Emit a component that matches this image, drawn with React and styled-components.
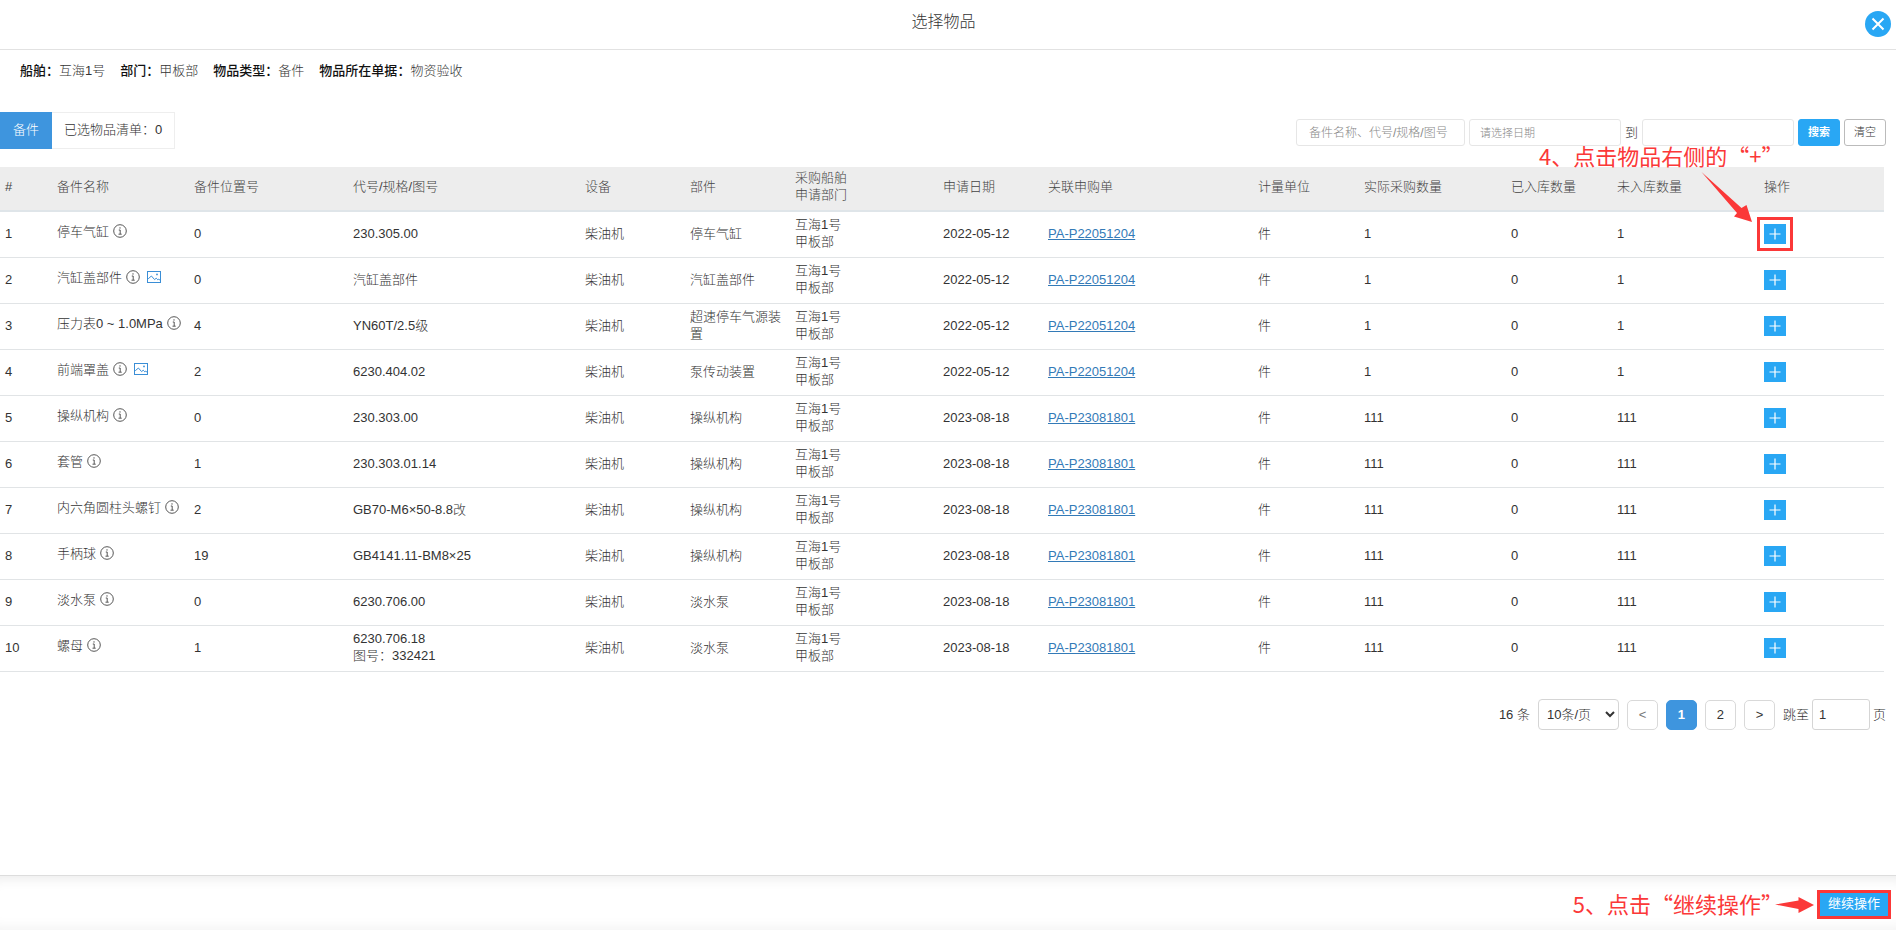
import React, { useState } from 'react';
import styled, { createGlobalStyle } from 'styled-components';

const columns = [
    { title: '#', width: 52 },
    { title: '备件名称', width: 137 },
    { title: '备件位置号', width: 159 },
    { title: '代号/规格/图号', width: 232 },
    { title: '设备', width: 105 },
    { title: '部件', width: 105 },
    { title: '采购船舶', subtitle: '申请部门', width: 148 },
    { title: '申请日期', width: 105 },
    { title: '关联申购单', width: 210 },
    { title: '计量单位', width: 106 },
    { title: '实际采购数量', width: 147 },
    { title: '已入库数量', width: 106 },
    { title: '未入库数量', width: 147 },
    { title: '操作', width: 125 },
];

const items = [
    { id: 1, name: '停车气缸', place: 0, code: '230.305.00', part: '停车气缸', date: '2022-05-12', order: 'PA-P22051204', amount: 1 },
    { id: 2, name: '汽缸盖部件', photo: true, place: 0, code: '汽缸盖部件', part: '汽缸盖部件', date: '2022-05-12', order: 'PA-P22051204', amount: 1 },
    { id: 3, name: '压力表0 ~ 1.0MPa', place: 4, code: 'YN60T/2.5级', part: '超速停车气源装置', date: '2022-05-12', order: 'PA-P22051204', amount: 1 },
    { id: 4, name: '前端罩盖', photo: true, place: 2, code: '6230.404.02', part: '泵传动装置', date: '2022-05-12', order: 'PA-P22051204', amount: 1 },
    { id: 5, name: '操纵机构', place: 0, code: '230.303.00', part: '操纵机构', date: '2023-08-18', order: 'PA-P23081801', amount: 111 },
    { id: 6, name: '套管', place: 1, code: '230.303.01.14', part: '操纵机构', date: '2023-08-18', order: 'PA-P23081801', amount: 111 },
    { id: 7, name: '内六角圆柱头螺钉', place: 2, code: 'GB70-M6×50-8.8改', part: '操纵机构', date: '2023-08-18', order: 'PA-P23081801', amount: 111 },
    { id: 8, name: '手柄球', place: 19, code: 'GB4141.11-BM8×25', part: '操纵机构', date: '2023-08-18', order: 'PA-P23081801', amount: 111 },
    { id: 9, name: '淡水泵', place: 0, code: '6230.706.00', part: '淡水泵', date: '2023-08-18', order: 'PA-P23081801', amount: 111 },
    { id: 10, name: '螺母', place: 1, code: '6230.706.18', drawing: '332421', part: '淡水泵', date: '2023-08-18', order: 'PA-P23081801', amount: 111 },
];

const summary = [
    { label: '船舶', value: '互海1号' },
    { label: '部门', value: '甲板部' },
    { label: '物品类型', value: '备件' },
    { label: '物品所在单据', value: '物资验收' },
];

function InfoIcon() {
    return (
        <svg width="14" height="14" viewBox="0 0 14 14" fill="none" stroke="#444" aria-hidden="true">
            <circle cx="7" cy="7" r="6.3" strokeWidth="0.9" />
            <path d="M5.8 6h1.4v4M5.5 10.2h3.2" strokeWidth="0.9" />
            <circle cx="7" cy="3.9" r="0.7" fill="#444" stroke="none" />
        </svg>
    );
}

function PhotoIcon() {
    return (
        <svg width="14" height="14" viewBox="0 0 14 14" fill="none" stroke="#3a8ed6" aria-hidden="true">
            <rect x="0.5" y="1.5" width="13" height="11" />
            <path d="M1.2 8.8L4.4 6l3.2 3.6 1.6-1.4 1.6 1.6 1-0.8 1.4 1.6" />
            <circle cx="10" cy="4.4" r="0.9" fill="#3a8ed6" stroke="none" />
        </svg>
    );
}

function ItemRow({ item }) {
    return (
        <tr>
            <Cell>{item.id}</Cell>
            <Cell>
                <ItemName>
                    {item.name}
                    <InfoIcon />
                    {item.photo && <PhotoLink href="#photo" aria-label="查看图片"><PhotoIcon /></PhotoLink>}
                </ItemName>
            </Cell>
            <Cell>{item.place}</Cell>
            <Cell>
                {item.code}
                {item.drawing && <div>图号：{item.drawing}</div>}
            </Cell>
            <Cell>柴油机</Cell>
            <Cell>{item.part}</Cell>
            <Cell>
                <div>互海1号</div>
                <div>甲板部</div>
            </Cell>
            <Cell>{item.date}</Cell>
            <Cell><OrderLink href="#order">{item.order}</OrderLink></Cell>
            <Cell>件</Cell>
            <Cell>{item.amount}</Cell>
            <Cell>0</Cell>
            <Cell>{item.amount}</Cell>
            <Cell>
                <AddWrap>
                    <AddButton type="button" aria-label="添加">
                        <svg width="12" height="12" viewBox="0 0 12 12" stroke="#fff" strokeWidth="1.2" aria-hidden="true">
                            <path d="M6 0.5v11M0.5 6h11" />
                        </svg>
                    </AddButton>
                    {item.id === 1 && <AddHint />}
                </AddWrap>
            </Cell>
        </tr>
    );
}

function AddHint() {
    return (
        <>
            <HintFrame />
            <HintArrow width="52" height="52" viewBox="0 0 52 52" aria-hidden="true">
                <path d="M0.5 1L40.5 37L45.5 34L51 51L33 45.5L36 42Z" fill="#fb3838" />
            </HintArrow>
            <FloatingNote>4、点击物品右侧的“+”</FloatingNote>
        </>
    );
}

function App() {
    const [page, setPage] = useState(1);

    return (
        <>
            <GlobalStyle />
            <Dialog lang="zh-CN">
                <Header>
                    <Title>选择物品</Title>
                    <CloseButton type="button" aria-label="关闭">
                        <svg width="14" height="14" viewBox="0 0 14 14" stroke="#fff" strokeWidth="2" aria-hidden="true">
                            <path d="M1.5 1.5l11 11M12.5 1.5l-11 11" />
                        </svg>
                    </CloseButton>
                </Header>

                <Summary>
                    {summary.map((entry) => (
                        <div key={entry.label}>
                            <dt>{entry.label}：</dt>
                            <dd>{entry.value}</dd>
                        </div>
                    ))}
                </Summary>

                <Toolbar>
                    <Tabs>
                        <Tab type="button" $active>备件</Tab>
                        <Tab type="button">已选物品清单：0</Tab>
                    </Tabs>
                    <Filters onSubmit={(e) => e.preventDefault()}>
                        <KeywordInput aria-label="关键字" placeholder="备件名称、代号/规格/图号" />
                        <DateInput aria-label="开始日期" placeholder="请选择日期" />
                        <label htmlFor="date-end">到</label>
                        <DateInput id="date-end" />
                        <FilterButton type="submit" $primary>搜索</FilterButton>
                        <FilterButton type="reset">清空</FilterButton>
                    </Filters>
                </Toolbar>

                <TableArea>
                    <Table>
                        <colgroup>
                            {columns.map((col) => <col key={col.title} style={{ width: col.width }} />)}
                        </colgroup>
                        <thead>
                            <tr>
                                {columns.map((col) => (
                                    <HeadCell key={col.title} scope="col">
                                        {col.title}
                                        {col.subtitle && <div>{col.subtitle}</div>}
                                    </HeadCell>
                                ))}
                            </tr>
                        </thead>
                        <tbody>
                            {items.map((item) => <ItemRow key={item.id} item={item} />)}
                        </tbody>
                    </Table>
                </TableArea>

                <Pagination aria-label="分页">
                    <span>16 条</span>
                    <PageSize aria-label="每页条数" defaultValue="10">
                        <option value="10">10条/页</option>
                        <option value="20">20条/页</option>
                        <option value="50">50条/页</option>
                    </PageSize>
                    <PageButton type="button" disabled={page === 1} onClick={() => setPage(1)}>&lt;</PageButton>
                    <PageButton type="button" $active={page === 1} onClick={() => setPage(1)}>1</PageButton>
                    <PageButton type="button" $active={page === 2} onClick={() => setPage(2)}>2</PageButton>
                    <PageButton type="button" disabled={page === 2} onClick={() => setPage(2)}>&gt;</PageButton>
                    <Jump>
                        <label htmlFor="page-jump">跳至</label>
                        <JumpInput id="page-jump" defaultValue="1" />
                        <span>页</span>
                    </Jump>
                </Pagination>

                <Footer>
                    <FooterNote>5、点击“继续操作”</FooterNote>
                    <svg width="40" height="16" viewBox="0 0 40 16" aria-hidden="true">
                        <path d="M0 7.5L23.5 3.5V0L39 8L23.5 16V12Z" fill="#fb3838" />
                    </svg>
                    <ContinueButton type="button">继续操作</ContinueButton>
                </Footer>
            </Dialog>
        </>
    );
}

const GlobalStyle = createGlobalStyle`
    *{
        box-sizing: border-box;
    }
    body{
        margin: 0;
        background: #fff;
    }
    body, button, input, select{
        font-family: "Liberation Sans", "Noto Sans CJK SC", sans-serif;
        font-size: 13px;
        font-weight: 300;
        line-height: 17px;
        color: #333;
    }
    button{
        padding: 0;
        border: none;
        cursor: pointer;
    }
    svg{
        display: block;
        flex: none;
    }
`;

const Dialog = styled.div`
    display: flex;
    flex-direction: column;
    min-height: 100vh;
`;

const Header = styled.header`
    display: grid;
    grid-template-columns: 1fr auto 1fr;
    align-items: center;
    height: 50px;
    padding: 0 5px 1px 0;
    border-bottom: 1px solid #e2e2e2;
`;

const Title = styled.h1`
    grid-column: 2;
    margin: 0 4px 4px 0;
    font-size: 16px;
    font-weight: 300;
    line-height: 24px;
`;

const CloseButton = styled.button`
    display: flex;
    align-items: center;
    justify-content: center;
    justify-self: end;
    width: 26px;
    height: 26px;
    border-radius: 50%;
    background: #29a7f4;
`;

const Summary = styled.dl`
    display: flex;
    gap: 15px;
    margin: 0;
    padding: 12px 20px;
    div{
        display: flex;
    }
    dt{
        font-weight: 500;
        color: #111;
    }
    dd{
        margin: 0;
    }
`;

const Toolbar = styled.div`
    display: flex;
    justify-content: space-between;
    padding: 21px 10px 18px 0;
`;

const Tabs = styled.div`
    display: flex;
`;

const Tab = styled.button`
    height: 37px;
    padding: 0 ${({ $active }) => ($active ? 13 : 12)}px 2px;
    border: ${({ $active }) => ($active ? 'none' : '1px solid #eee')};
    border-left: none;
    background: ${({ $active }) => ($active ? '#3e95de' : '#fff')};
    color: ${({ $active }) => ($active ? '#fff' : '#333')};
`;

const Filters = styled.form`
    display: flex;
    align-items: center;
    gap: 4px;
    padding-top: 4px;
`;

const TextInput = styled.input`
    height: 27px;
    border: 1px solid #e6e6e6;
    border-radius: 3px;
    outline: none;
    background: #fff;
    &::placeholder{
        color: #888;
    }
`;

const KeywordInput = styled(TextInput)`
    width: 169px;
    padding: 0 12px;
    font-size: 12px;
`;

const DateInput = styled(TextInput)`
    width: 152px;
    padding: 0 10px;
    font-size: 11px;
`;

const FilterButton = styled.button`
    width: 42px;
    height: 27px;
    border: 1px solid ${({ $primary }) => ($primary ? '#29a7f4' : '#bbb')};
    border-radius: 3px;
    background: ${({ $primary }) => ($primary ? '#29a7f4' : '#fff')};
    color: ${({ $primary }) => ($primary ? '#fff' : '#333')};
    font-size: 11px;
    font-weight: ${({ $primary }) => ($primary ? 700 : 300)};
`;

const TableArea = styled.div`
    padding-right: 12px;
`;

const Table = styled.table`
    width: 100%;
    table-layout: fixed;
    border-collapse: separate;
    border-spacing: 0;
`;

const HeadCell = styled.th`
    height: 45px;
    padding: 2px 5px 7px;
    border-bottom: 2px solid #dfe5e9;
    background: #ededed;
    color: #444;
    font-weight: 300;
    text-align: left;
    vertical-align: middle;
`;

const Cell = styled.td`
    height: 46px;
    padding: 4px 5px 7px;
    border-bottom: 1px solid #e1e4e6;
    vertical-align: middle;
`;

const ItemName = styled.div`
    display: flex;
    align-items: center;
    gap: 4px;
    padding-bottom: 4px;
    white-space: nowrap;
`;

const PhotoLink = styled.a`
    margin-left: 3px;
`;

const OrderLink = styled.a`
    color: #337ab7;
    text-decoration: underline;
`;

const AddWrap = styled.div`
    position: relative;
    width: 22px;
    margin-top: 2px;
`;

const AddButton = styled.button`
    display: flex;
    align-items: center;
    justify-content: center;
    width: 22px;
    height: 20px;
    background: #29a7f4;
`;

const HintFrame = styled.div`
    position: absolute;
    inset: -7px;
    border: 3px solid #fb3838;
    pointer-events: none;
`;

const HintArrow = styled.svg`
    position: absolute;
    right: 33px;
    bottom: 21px;
`;

const Note = styled.span`
    color: #fb3838;
    font-family: "Noto Sans CJK SC", sans-serif;
    font-size: 22px;
    font-weight: 400;
    line-height: 24px;
    white-space: nowrap;
`;

const FloatingNote = styled(Note)`
    position: absolute;
    bottom: 77px;
    left: -225px;
`;

/* the closing quote is full width, so the arrow tucks into its empty half */
const FooterNote = styled(Note)`
    margin-right: -10px;
    padding-bottom: 4px;
`;

const Pagination = styled.nav`
    display: flex;
    align-items: center;
    justify-content: flex-end;
    gap: 8px;
    padding: 27px 10px;
`;

const PageSize = styled.select`
    width: 81px;
    height: 31px;
    padding: 0 4px;
    border: 1px solid #d5d5d5;
    border-radius: 4px;
    background: #fff;
`;

const PageButton = styled.button`
    width: 31px;
    height: 30px;
    border: 1px solid ${({ $active }) => ($active ? '#3e95de' : '#d9d9d9')};
    border-radius: 5px;
    background: ${({ $active }) => ($active ? '#3e95de' : '#fff')};
    color: ${({ $active }) => ($active ? '#fff' : '#333')};
    font-weight: ${({ $active }) => ($active ? 700 : 300)};
    &:disabled{
        color: #777;
        cursor: default;
    }
`;

const Jump = styled.div`
    display: flex;
    align-items: center;
    gap: 3px;
`;

const JumpInput = styled(TextInput)`
    width: 58px;
    height: 31px;
    padding: 0 6px;
    border-color: #d5d5d5;
`;

const Footer = styled.footer`
    display: flex;
    align-items: center;
    justify-content: flex-end;
    gap: 2px;
    height: 55px;
    margin-top: auto;
    padding: 3px 5px 0 0;
    border-top: 1px solid #ddd;
    box-shadow: inset 0 14px 14px -12px rgba(0, 0, 0, 0.09), inset 0 -14px 14px -12px rgba(0, 0, 0, 0.06);
`;

const ContinueButton = styled.button`
    width: 74px;
    height: 29px;
    padding-bottom: 2px;
    border: 3px solid #fb3838;
    background: #29a7f4;
    color: #fff;
    font-weight: 400;
`;

export default App;
